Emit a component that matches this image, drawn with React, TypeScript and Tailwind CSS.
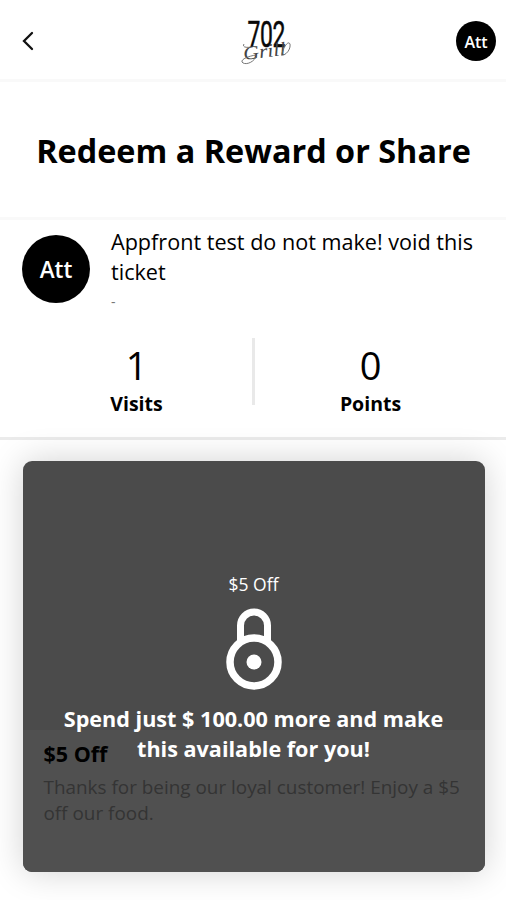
const sans = "font-['Open_Sans','Noto_Sans',sans-serif]";

function Logo() {
  return (
    <svg className="overflow-visible" width="54" height="50" viewBox="0 0 54 50" role="img" aria-label="702 Grill">
      <g transform="translate(8.500 31) scale(.62 1)">
        <text x="0" y="0" fontFamily="'Roboto', sans-serif" fontSize="37" textLength="61" lengthAdjust="spacing" fill="#080808" stroke="#080808" strokeWidth=".5">702</text>
      </g>
      <text
        x="0"
        y="0"
        transform="translate(5 44) rotate(-7) scale(1.150 1)"
        fontFamily="'Liberation Serif', serif"
        fontStyle="italic"
        fontSize="19"
        fill="#444"
      >
        Grill
      </text>
      <path
        d="M17 41C13 48 5 49 3 46c-1-3 7-6 14-7M5 28c-2 3 2 4 7 3M42 39c5 1 10-6 9-11-2-4-7 4-8 10"
        fill="none"
        stroke="#666"
        strokeWidth=".9"
      />
    </svg>
  );
}

function Stat({ value, label }: { value: string; label: string }) {
  return (
    <div className="flex flex-1 flex-col items-center pt-[7px]">
      <span className="text-[38px] leading-[40px]">{value}</span>
      <span className="mt-[7px] text-[19.500px] font-bold leading-6">{label}</span>
    </div>
  );
}

function Lock() {
  return (
    <svg width="56" height="82" viewBox="0 0 56 82" fill="none" stroke="#fff">
      <path d="M14.500 34V17.500a13.500 13.500 0 0 1 27 0V34" strokeWidth="7" />
      <circle cx="28" cy="54" r="24" strokeWidth="7.500" />
      <circle cx="28" cy="54" r="7.500" fill="#fff" stroke="none" />
    </svg>
  );
}

export default function App() {
  return (
    <main className={`h-[900px] w-[506px] overflow-hidden bg-white text-black ${sans}`}>
      <header className="flex h-[82px] items-start justify-between border-b-[3px] border-[#f9f9f9]">
        <div className="w-[66px] pl-[21px] pt-[31px]">
          <svg width="14" height="20" viewBox="0 0 14 20" fill="none" stroke="#111" strokeWidth="2.300" strokeLinecap="round">
            <path d="M11 2 3 10l8 8" />
          </svg>
        </div>
        <div className="ml-[26px] pt-4"><Logo /></div>
        <div className="flex w-[66px] pl-4 pt-[21px]">
          <span className="flex h-10 w-10 items-center justify-center rounded-full bg-black pt-[2px] text-[16px] font-semibold leading-5 text-white">Att</span>
        </div>
      </header>

      <section className="flex h-[138px] items-center justify-center border-b-[3px] border-[#f9f9f9] pl-px pt-[2px]">
        <h1 className="whitespace-nowrap text-[32.400px] font-bold">Redeem a Reward or Share</h1>
      </section>

      <section className="h-[220px] border-b-[3px] border-[#ebebeb]">
        <div className="flex h-[118px] pl-[22px]">
          <span className="mt-[15px] flex h-[68px] w-[68px] shrink-0 items-center justify-center rounded-full bg-black pt-[2px] text-[22.500px] font-semibold text-white">Att</span>
          <div className="ml-[21px] pt-[7px]">
            <p className="whitespace-nowrap text-[21.600px] leading-[29.500px]">Appfront test do not make! void this<br />ticket</p>
            <p className="pt-[4px] text-[14px] leading-[24px] text-[#777]">-</p>
          </div>
        </div>
        <div className="flex pl-[21px] pr-5">
          <Stat value="1" label="Visits" />
          <div className="h-[67px] w-[3px] bg-[#e9e9e9]" />
          <Stat value="0" label="Points" />
        </div>
      </section>

      <section className="pl-[22.500px] pr-[21.500px] pt-[21px]">
        <article className="relative flex h-[411px] flex-col rounded-[9px] bg-[#4b4b4b] shadow-[0_0_34px_rgba(0,0,0,0.18)]">
          <div className="h-[269px]" />
          <div className="flex-1 rounded-b-[9px] bg-[#505050] pl-[21px] pt-[9px]">
            <h2 className="text-[21.500px] font-bold leading-[30px]">$5 Off</h2>
            <p className="mt-[5px] whitespace-nowrap text-[18.900px] leading-[26px] text-[#343434]">Thanks for being our loyal customer! Enjoy a $5<br />off our food.</p>
          </div>
          <div className="absolute inset-0 flex flex-col items-center pt-[111px] text-white">
            <p className="text-[17.500px] font-medium leading-[25px]">$5 Off</p>
            <div className="mt-[11px]"><Lock /></div>
            <p className="mt-[14px] whitespace-nowrap text-center text-[21.600px] font-bold leading-[30px]">Spend just $ 100.00 more and make<br />this available for you!</p>
          </div>
        </article>
      </section>
    </main>
  );
}
